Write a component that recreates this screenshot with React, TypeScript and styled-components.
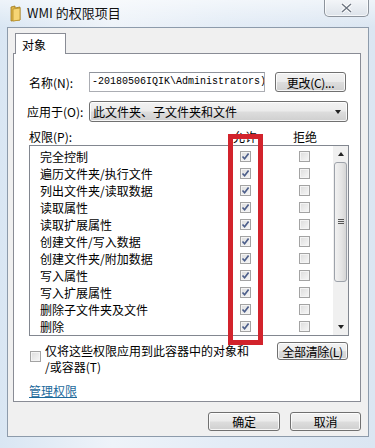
import React, { FC } from 'react'
import styled, { createGlobalStyle } from 'styled-components'

const GlobalStyle = createGlobalStyle`
    html, body { margin: 0; padding: 0; }
    body {
        width: 375px; height: 448px;
        overflow: hidden;
        font-family: "Noto Sans CJK SC", "Liberation Sans", sans-serif;
        font-size: 12px;
        color: #000;
    }
`

const cjk = `"Noto Sans CJK SC", "Liberation Sans", sans-serif`

const Frame = styled.div`
    position: relative;
    width: 375px; height: 448px;
    box-sizing: border-box;
    padding: 0 6px 0 7px;
    background:
        linear-gradient( 180deg, rgba(255,255,255,0.55) 0px, rgba(255,255,255,0) 27px ),
        linear-gradient( 90deg, #d9e6f3 0%, #eef3f9 30%, #e3ecf6 60%, #dbe6f2 100% );
    overflow: hidden;
`

const TitleBar = styled.div`
    height: 27px;
    display: flex;
    align-items: center;
    padding-left: 3px;
    gap: 6px;
`

const Title = styled.div`
    font-family: ${ cjk };
    font-size: 13px;
    color: #111;
    margin-top: -2px;
`

const CloseButton = styled.div`
    margin-left: auto;
    align-self: flex-start;
    width: 45px; height: 18px;
    box-sizing: border-box;
    margin-top: -1px;
    border: 1px solid #8c939c;
    border-top: none;
    border-radius: 0 0 5px 5px;
    background: linear-gradient( #f4f6f9, #dde3ea );
    display: flex;
    align-items: center;
    justify-content: center;
    box-shadow: inset 0 0 0 1px rgba(255,255,255,0.7);
`

const Client = styled.div`
    height: 410px;
    box-sizing: border-box;
    border: 1px solid #8d9bab;
    background: #f0f0f0;
    padding: 5px 7px 0 5px;
`

const TabStrip = styled.div`
    display: flex;
    padding-left: 2px;
`

const Tab = styled.div`
    width: 51px; height: 21px;
    box-sizing: border-box;
    border: 1px solid #898c95;
    border-bottom: none;
    background: #fff;
    font-family: ${ cjk };
    font-size: 12px;
    padding: 2px 0 0 6px;
    margin-bottom: -1px;
    position: relative;
    z-index: 1;
`

const Panel = styled.div`
    height: 349px;
    box-sizing: border-box;
    border: 1px solid #898c95;
    background: #fff;
    padding: 0 12px 0 15px;
`

const FieldRow = styled.div<{ $top: number; $h: number }>`
    display: flex;
    align-items: center;
    margin-top: ${ p => p.$top }px;
    height: ${ p => p.$h }px;
`

const Label = styled.div`
    width: 60px;
    flex: none;
    font-family: ${ cjk };
    font-size: 12px;
    white-space: nowrap;
`

const TextBox = styled.div`
    width: 176px; height: 20px;
    box-sizing: border-box;
    border: 1px solid #abadb3;
    border-top-color: #8f939b;
    overflow: hidden;
    white-space: nowrap;
    font-family: "Liberation Mono", monospace;
    font-size: 10px;
    line-height: 18px;
    padding-left: 2px;
`

const Button = styled.div<{ $w: number; $h: number }>`
    width: ${ p => p.$w }px; height: ${ p => p.$h }px;
    box-sizing: border-box;
    border: 1px solid #707070;
    border-radius: 3px;
    background: linear-gradient( #f2f2f2 0%, #ebebeb 48%, #dddddd 52%, #cfcfcf 100% );
    box-shadow: inset 0 0 0 1px rgba(255,255,255,0.8);
    display: flex;
    align-items: center;
    justify-content: center;
    font-family: ${ cjk };
    font-size: 12px;
    letter-spacing: -0.3px;
    white-space: nowrap;
    flex: none;
`

const Combo = styled.div`
    width: 259px; height: 21px;
    box-sizing: border-box;
    border: 1px solid #707070;
    border-radius: 3px;
    background: linear-gradient( #f2f2f2 0%, #ebebeb 48%, #dddddd 52%, #cfcfcf 100% );
    box-shadow: inset 0 0 0 1px rgba(255,255,255,0.8);
    display: flex;
    align-items: center;
    padding: 0 6px 0 3px;
    font-family: ${ cjk };
    font-size: 12px;
    justify-content: space-between;
`

const Arrow = styled.div<{ $up?: boolean }>`
    width: 0; height: 0;
    border-left: 3.5px solid transparent;
    border-right: 3.5px solid transparent;
    ${ p => p.$up ? 'border-bottom: 4px solid #222;' : 'border-top: 4px solid #222;' }
`

const HeaderGrid = styled.div`
    display: grid;
    grid-template-columns: 186px 60px 60px;
    margin-top: 6px;
    height: 16px;
    align-items: center;
    font-family: ${ cjk };
    font-size: 12px;
    > span + span { text-align: center; }
`

const List = styled.div`
    margin-top: 1px;
    width: 320px; height: 191px;
    box-sizing: border-box;
    border: 1px solid #828790;
    display: flex;
`

const Rows = styled.div`
    flex: 1;
    padding-top: 2px;
`

const PermRow = styled.div`
    display: grid;
    grid-template-columns: 175px 60px 58px;
    padding-left: 10px;
    height: 17px;
    align-items: center;
    font-family: ${ cjk };
    font-size: 12px;
    white-space: nowrap;
`

const Cell = styled.div`
    display: flex;
    justify-content: center;
`

const Box = styled.div`
    width: 11px; height: 11px;
    box-sizing: border-box;
    border: 1px solid #a3a3a3;
    background: linear-gradient( 135deg, #dcdcdc, #f7f7f7 );
    box-shadow: inset 0 0 0 1px #f4f4f4;
    display: flex;
    align-items: center;
    justify-content: center;
    flex: none;
`

const ScrollBar = styled.div`
    width: 15px;
    flex: none;
    background: #f0f0f0;
    display: flex;
    flex-direction: column;
`

const ScrollBtn = styled.div`
    height: 16px;
    display: flex;
    align-items: center;
    justify-content: center;
`

const Thumb = styled.div`
    height: 120px;
    box-sizing: border-box;
    margin: 0 1px;
    border: 1px solid #9da2aa;
    border-radius: 3px;
    background: linear-gradient( 90deg, #f2f2f2, #e4e4e4 60%, #d6d6d6 );
    display: flex;
    align-items: center;
    justify-content: center;
`

const Grip = styled.div`
    width: 6px; height: 6px;
    background: repeating-linear-gradient( #555 0 1px, transparent 1px 2px );
`

const Track = styled.div`
    flex: 1;
`

const BottomRow = styled.div`
    display: flex;
    justify-content: space-between;
    margin-top: 6px;
`

const Inherit = styled.div`
    display: flex;
    align-items: flex-start;
    gap: 4px;
    padding: 1px 0 0 1px;
    > ${ Box } { margin-top: 8px; }
`

const InheritText = styled.div`
    font-family: ${ cjk };
    font-size: 12px;
    line-height: 16px;
`

const Link = styled.a`
    display: inline-block;
    margin-top: 9px;
    font-family: ${ cjk };
    font-size: 12px;
    line-height: 14px;
    color: #1d6a9c;
    text-decoration: underline;
`

const Footer = styled.div`
    display: flex;
    justify-content: flex-end;
    gap: 10px;
    margin-top: 10px;
`

const Annotation = styled.div`
    position: absolute;
    left: 228px; top: 134px;
    width: 35px; height: 211px;
    box-sizing: border-box;
    border: 5px solid #d2232c;
    pointer-events: none;
`

const Folder: FC = () => <svg width="11" height="17" viewBox="0 0 11 17">
    <path d="M1 2 L5 1 L5 3 L10 2 L10 15 L1 16 Z" fill="#e0b74a" stroke="#a07a1c" strokeWidth="0.8" />
    <path d="M3 4 L10 3 L10 15 L3 16 Z" fill="#f6d574" stroke="#b8902a" strokeWidth="0.8" />
</svg>

const Check: FC = () => <svg width="9" height="9" viewBox="0 0 9 9">
    <path d="M1.5 4.5 L3.6 6.8 L7.6 1.6" fill="none" stroke="#4c5e8a" strokeWidth="1.7" />
</svg>

const perms = [
    '完全控制', '遍历文件夹/执行文件', '列出文件夹/读取数据', '读取属性', '读取扩展属性',
    '创建文件/写入数据', '创建文件夹/附加数据', '写入属性', '写入扩展属性', '删除子文件夹及文件', '删除',
]

export default function App() {
    return <>
        <GlobalStyle />
        <Frame>
            <TitleBar>
                <Folder />
                <Title>WMI 的权限项目</Title>
                <CloseButton>
                    <svg width="13" height="10" viewBox="0 0 13 10">
                        <path d="M2 1 L11 9 M11 1 L2 9" stroke="#fff" strokeWidth="3.2" />
                        <path d="M2 1 L11 9 M11 1 L2 9" stroke="#6c7480" strokeWidth="1.4" />
                    </svg>
                </CloseButton>
            </TitleBar>
            <Client>
                <TabStrip><Tab>对象</Tab></TabStrip>
                <Panel>
                    <FieldRow $top={ 18 } $h={ 20 }>
                        <Label>名称(N):</Label>
                        <TextBox>-20180506IQIK\Administrators)</TextBox>
                        <div style={ { width: 10 } } />
                        <Button $w={ 71 } $h={ 20 }>更改(C)...</Button>
                    </FieldRow>
                    <FieldRow $top={ 9 } $h={ 21 }>
                        <Label style={ { marginLeft: -2, width: 62 } }>应用于(O):</Label>
                        <Combo>此文件夹、子文件夹和文件<Arrow /></Combo>
                    </FieldRow>
                    <HeaderGrid>
                        <span>权限(P):</span>
                        <span>允许</span>
                        <span>拒绝</span>
                    </HeaderGrid>
                    <List>
                        <Rows>
                            { perms.map( name => <PermRow key={ name }>
                                <span>{ name }</span>
                                <Cell><Box><Check /></Box></Cell>
                                <Cell><Box /></Cell>
                            </PermRow> ) }
                        </Rows>
                        <ScrollBar>
                            <ScrollBtn><Arrow $up /></ScrollBtn>
                            <Thumb><Grip /></Thumb>
                            <Track />
                            <ScrollBtn><Arrow /></ScrollBtn>
                        </ScrollBar>
                    </List>
                    <BottomRow>
                        <Inherit>
                            <Box />
                            <InheritText>仅将这些权限应用到此容器中的对象和<br />/或容器(T)</InheritText>
                        </Inherit>
                        <Button $w={ 71 } $h={ 18 }>全部清除(L)</Button>
                    </BottomRow>
                    <Link href="#">管理权限</Link>
                </Panel>
                <Footer>
                    <Button $w={ 72 } $h={ 19 }>确定</Button>
                    <Button $w={ 71 } $h={ 19 }>取消</Button>
                </Footer>
            </Client>
            <Annotation />
        </Frame>
    </>
}
